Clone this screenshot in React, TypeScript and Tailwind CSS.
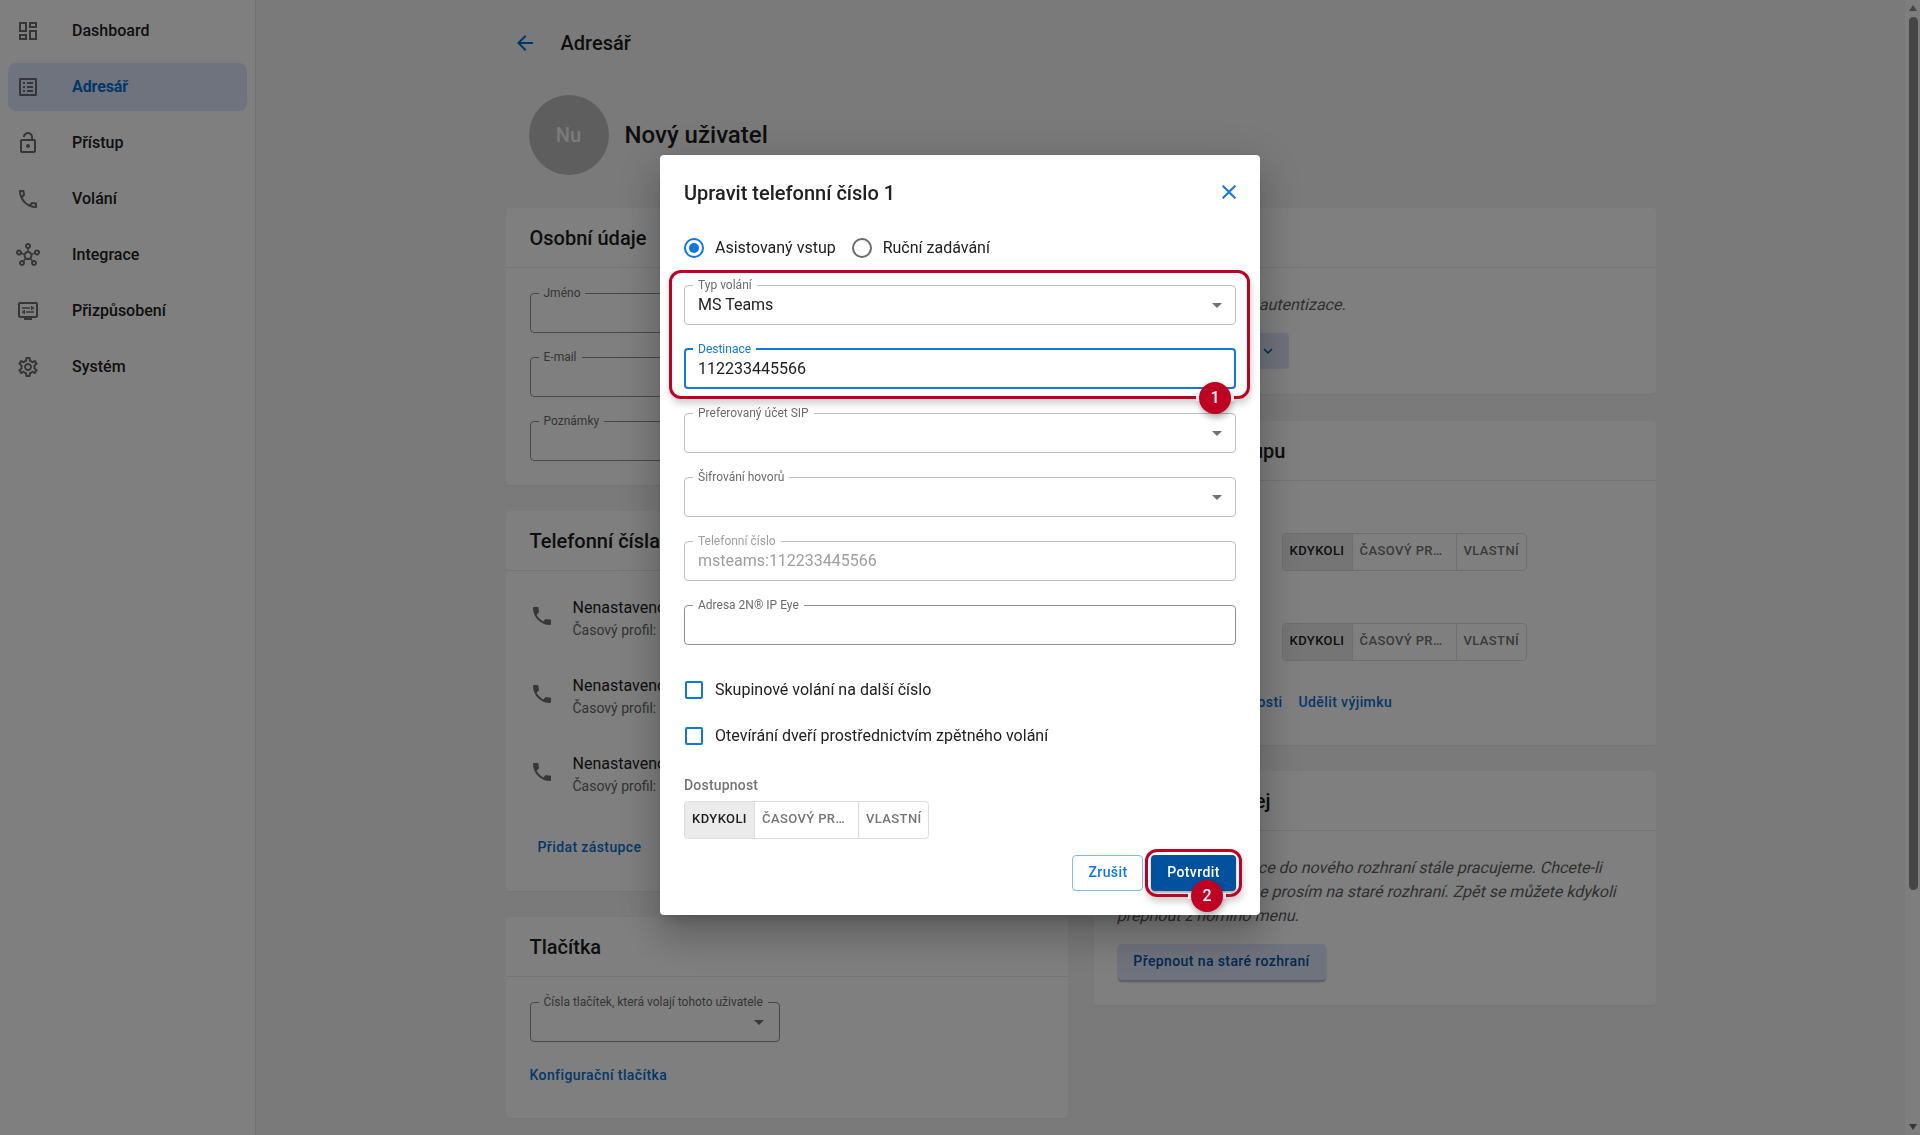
import React from "react";
import {
  MdOutlineDashboard,
  MdOutlineListAlt,
  MdLockOpen,
  MdOutlinePhone,
  MdOutlineHub,
  MdOutlineDisplaySettings,
  MdOutlineSettings,
  MdArrowBack,
  MdClose,
  MdArrowDropDown,
  MdPhone,
  MdKeyboardArrowDown,
} from "react-icons/md";

const nav = [
  { label: "Dashboard", Icon: MdOutlineDashboard },
  { label: "Adresář", Icon: MdOutlineListAlt, active: true },
  { label: "Přístup", Icon: MdLockOpen },
  { label: "Volání", Icon: MdOutlinePhone },
  { label: "Integrace", Icon: MdOutlineHub },
  { label: "Přizpůsobení", Icon: MdOutlineDisplaySettings },
  { label: "Systém", Icon: MdOutlineSettings },
];

function Sidebar() {
  return (
    <nav className="flex w-64 shrink-0 flex-col gap-2 border-r border-[#e0e0e0] bg-white px-2 pt-[7px]">
      {nav.map(({ label, Icon, active }) => (
        <div
          key={label}
          className={
            active
              ? "flex h-12 items-center gap-8 rounded-lg bg-[#dfe6fb] pl-2 font-bold tracking-[-0.1px] text-[#0071d9]"
              : "flex h-12 items-center gap-8 pl-2 font-medium text-[#212121]"
          }
        >
          <Icon className="size-6 text-[#6c6c6c]" />
          <span>{label}</span>
        </div>
      ))}
    </nav>
  );
}

type FieldProps = {
  label: string;
  value?: string;
  tone?: "normal" | "light" | "disabled" | "focus";
  select?: boolean;
  className?: string;
};

const fieldTone = {
  normal: "h-12 border-[#8f8f8f] pl-2 text-[#212121]",
  light: "h-12 border-[#bdbdbd] pl-2 text-[#212121]",
  disabled: "h-12 border-[#bdbdbd] pl-2 text-[#9e9e9e]",
  focus: "-mt-px h-[49px] border-2 border-[#1277e0] pl-[7px] text-[#212121]",
};

const legendTone = {
  normal: "leading-[17px] text-[#6b6b6b]",
  light: "leading-[17px] text-[#6b6b6b]",
  disabled: "leading-[17px] text-[#9e9e9e]",
  focus: "leading-[18px] text-[#1277e0]",
};

function Field({ label, value, tone = "normal", select, className = "" }: FieldProps) {
  return (
    <fieldset className={`min-w-0 rounded border ${fieldTone[tone]} ${className}`}>
      <legend className={`px-[5px] text-xs ${legendTone[tone]}`}>{label}</legend>
      <div className="flex h-[22px] items-center justify-between pr-1.5 pl-[5px]">
        <span className="leading-5">{value}</span>
        {select && <MdArrowDropDown className="size-6 text-[#707070]" />}
      </div>
    </fieldset>
  );
}

function Card({ title, titleClass = "", className, children }: { title: string; titleClass?: string; className: string; children: React.ReactNode }) {
  return (
    <section className={`rounded bg-white shadow-[0_1px_2px_rgba(0,0,0,0.06)] ${className}`}>
      <h2 className="flex h-[60px] items-center border-b border-[#e8e8e8] px-6 text-xl font-medium">
        <span className={titleClass}>{title}</span>
      </h2>
      {children}
    </section>
  );
}

function Toggle() {
  return (
    <div className="flex h-[38px] w-[245px] overflow-hidden rounded border border-[#dcdcdc] text-[13px] leading-[34px] font-medium tracking-[0.4px] text-[#757575]">
      <span className="w-[70px] border-r border-[#dcdcdc] bg-[#ebebeb] text-center text-[#212121]">KDYKOLI</span>
      <span className="w-[104px] border-r border-[#dcdcdc] pl-[7px]">ČASOVÝ PR…</span>
      <span className="flex-1 pl-[7px]">VLASTNÍ</span>
    </div>
  );
}

function Link({ children }: { children: React.ReactNode }) {
  return <a className="text-sm leading-5 font-medium tracking-[0.4px] text-[#0a6fd0]">{children}</a>;
}

function PhoneRow() {
  return (
    <div className="flex h-[78px] items-start gap-[19px]">
      <MdPhone className="mt-2 size-6 text-[#6f6f6f]" />
      <div className="whitespace-nowrap">
        <div className="leading-6">Nenastaveno</div>
        <div className="text-sm leading-5 text-[#666666]">Časový profil:</div>
      </div>
    </div>
  );
}

function Page() {
  return (
    <main className="flex-1 bg-[#f5f5f5]">
      <div className="mx-auto w-[1150px]">
        <header className="flex h-[85px] items-center gap-6 pl-[7px]">
          <MdArrowBack className="size-6 text-[#0071d9]" />
          <h1 className="text-xl font-medium">Adresář</h1>
        </header>
        <div className="mt-2.5 flex items-center gap-4 pl-[23px]">
          <div className="flex size-20 items-center justify-center rounded-full bg-[#bdbdbd] text-xl font-medium text-[#f5f5f5]">
            Nu
          </div>
          <div className="text-2xl font-medium">Nový uživatel</div>
        </div>

        <div className="mt-[33px] grid grid-cols-2 gap-[26px]">
          <div className="flex flex-col">
            <Card title="Osobní údaje" className="h-[277px]">
              <div className="flex flex-col gap-4 px-6 pt-[17px]">
                <Field label="Jméno" />
                <Field label="E-mail" />
                <Field label="Poznámky" />
              </div>
            </Card>
            <Card title="Telefonní čísla" className="mt-[26px] h-[380px]">
              <div className="px-6 pt-[25px]">
                <PhoneRow />
                <PhoneRow />
                <PhoneRow />
                <div className="pt-[5px] pl-2">
                  <Link>Přidat zástupce</Link>
                </div>
              </div>
            </Card>
            <Card title="Tlačítka" className="mt-[26px] h-[201px]">
              <div className="px-6 pt-[17px]">
                <Field label="Čísla tlačítek, která volají tohoto uživatele" select className="w-[250px] pr-0.5" />
                <div className="pt-[21px]">
                  <Link>Konfigurační tlačítka</Link>
                </div>
              </div>
            </Card>
          </div>

          <div className="flex flex-col">
            <Card title="" className="h-[186px]">
              <div className="px-6 pt-[25px]">
                <p className="w-[229px] text-right text-[#5f5f5f]">
                  <span className="inline-block -skew-x-[14deg]">autentizace.</span>
                </p>
                <div className="mt-4 flex h-9 w-[171px] items-center justify-end rounded bg-[#dfe6fb] pr-3">
                  <MdKeyboardArrowDown className="size-[18px] text-[#00549f]" />
                </div>
              </div>
            </Card>
            <Card title="upu" titleClass="w-[168px] text-right" className="mt-[27px] h-[324px]">
              <div className="pt-[52px] pl-[188px]">
                <Toggle />
                <div className="h-[52px]" />
                <Toggle />
              </div>
              <div className="flex gap-4 pt-[31px] pl-[164px]">
                <Link>osti</Link>
                <Link>Udělit výjimku</Link>
              </div>
            </Card>
            <Card title="ej" titleClass="w-[153px] text-right" className="mt-[26px] h-[234px]">
              <div className="px-6 pt-[25px]">
                <div className="leading-6 whitespace-nowrap text-[#5f5f5f]">
                  <p className="w-[485px] -skew-x-[14deg] text-right">ce do nového rozhraní stále pracujeme. Chcete-li</p>
                  <p className="w-[499px] -skew-x-[14deg] text-right">e prosím na staré rozhraní. Zpět se můžete kdykoli</p>
                  <p className="-skew-x-[14deg]">přepnout z horního menu.</p>
                </div>
                <button className="mt-4 h-9 w-[208px] rounded bg-[#dfe6fb] pb-0.5 text-sm font-medium tracking-[0.4px] text-[#00549f] shadow-[0_2px_2px_rgba(0,0,0,0.3)]">
                  Přepnout na staré rozhraní
                </button>
              </div>
            </Card>
          </div>
        </div>
      </div>
    </main>
  );
}

function Scrollbar() {
  return (
    <div className="flex w-[15px] shrink-0 flex-col items-center justify-between bg-[#fcfcfc] pt-[5px] pb-[5px] pl-px">
      <svg viewBox="0 0 8 6" className="h-1.5 w-2" fill="#8b8b8b">
        <path d="M4 0l4 6H0z" />
      </svg>
      <div className="mt-[6px] h-[873px] w-[9px] rounded-full bg-[#8b8b8b]" />
      <div className="flex-1" />
      <svg viewBox="0 0 8 6" className="h-1.5 w-2" fill="#707070">
        <path d="M0 0h8L4 6z" />
      </svg>
    </div>
  );
}

/* Numbered badge sitting in a small gap of the highlight frame. */
function Callout({ n, className }: { n: number; className: string }) {
  return (
    <div className={`absolute flex h-8 w-[38px] items-center justify-center ${className}`}>
      <div className="absolute inset-x-0 top-[13px] h-1.5 bg-white" />
      <div className="relative flex size-8 items-center justify-center rounded-full bg-[#c00022] font-medium text-white shadow-[1px_4px_6px_rgba(0,0,0,0.3)]">
        {n}
      </div>
    </div>
  );
}

function Radio({ label, checked }: { label: string; checked?: boolean }) {
  return (
    <label className="flex items-center gap-[11px]">
      <span
        className={
          checked
            ? "flex size-5 items-center justify-center rounded-full border-2 border-[#0f76e0]"
            : "size-5 rounded-full border-2 border-[#6b6b6b]"
        }
      >
        {checked && <span className="size-2.5 rounded-full bg-[#0f76e0]" />}
      </span>
      {label}
    </label>
  );
}

function Check({ label }: { label: string }) {
  return (
    <label className="flex h-[46px] items-center gap-3 pl-px">
      <span className="size-[18px] rounded-xs border-2 border-[#0f76e0]" />
      {label}
    </label>
  );
}

function Dialog() {
  return (
    <div className="fixed inset-0 flex items-start justify-center bg-black/50 pt-[155px]">
      <div className="relative flex h-[760px] w-[600px] flex-col rounded bg-white px-6 text-[#212121] shadow-[0_11px_15px_-7px_rgba(0,0,0,0.2),0_24px_38px_3px_rgba(0,0,0,0.14),0_9px_46px_8px_rgba(0,0,0,0.12)]">
        <div className="flex h-[75px] items-center justify-between">
          <h2 className="text-xl font-medium">Upravit telefonní číslo 1</h2>
          <MdClose className="-mr-[5px] mb-0.5 size-6 text-[#0f76e0]" />
        </div>
        <div className="mt-1.5 flex h-6 items-center gap-4">
          <Radio label="Asistovaný vstup" checked />
          <Radio label="Ruční zadávání" />
        </div>
        <div className="mt-[17px] flex flex-col gap-4">
          <Field label="Typ volání" value="MS Teams" tone="light" select />
          <Field label="Destinace" value="112233445566" tone="focus" />
          <Field label="Preferovaný účet SIP" tone="light" select />
          <Field label="Šifrování hovorů" tone="light" select />
          <Field label="Telefonní číslo" value="msteams:112233445566" tone="disabled" />
          <Field label="Adresa 2N® IP Eye" tone="normal" />
        </div>
        <div className="mt-[22px]">
          <Check label="Skupinové volání na další číslo" />
          <Check label="Otevírání dveří prostřednictvím zpětného volání" />
        </div>
        <div className="mt-4 mb-[6px] text-sm leading-5 font-medium tracking-[0.2px] text-[#757575]">Dostupnost</div>
        <Toggle />
        <div className="mt-4 flex justify-end gap-2 text-sm font-medium tracking-[0.4px]">
          <button className="h-9 w-[71px] rounded border border-[#80bbf0] pb-0.5 pl-px text-[#0f76e0]">Zrušit</button>
          <button className="h-9 w-[85px] rounded bg-[#00519e] pb-0.5 text-white shadow-[0_2px_3px_rgba(0,0,0,0.35)]">Potvrdit</button>
        </div>

        <div className="absolute top-[115px] left-[9px] h-[129px] w-[581px] rounded-xl border-3 border-[#c00022] shadow-[1px_5px_7px_rgba(0,0,0,0.18)]">
          <Callout n={1} className="right-[13px] -bottom-[18px]" />
        </div>
        <div className="absolute top-[694px] right-[18px] h-[48px] w-[97px] rounded-xl border-3 border-[#c00022] shadow-[1px_5px_7px_rgba(0,0,0,0.18)]">
          <Callout n={2} className="right-[13px] -bottom-[18px]" />
        </div>
      </div>
    </div>
  );
}

export default function App() {
  return (
    <div className="flex h-[1135px] overflow-hidden bg-white font-['Roboto',sans-serif] text-base text-[#1c1c1c]">
      <Sidebar />
      <Page />
      <Scrollbar />
      <Dialog />
    </div>
  );
}
